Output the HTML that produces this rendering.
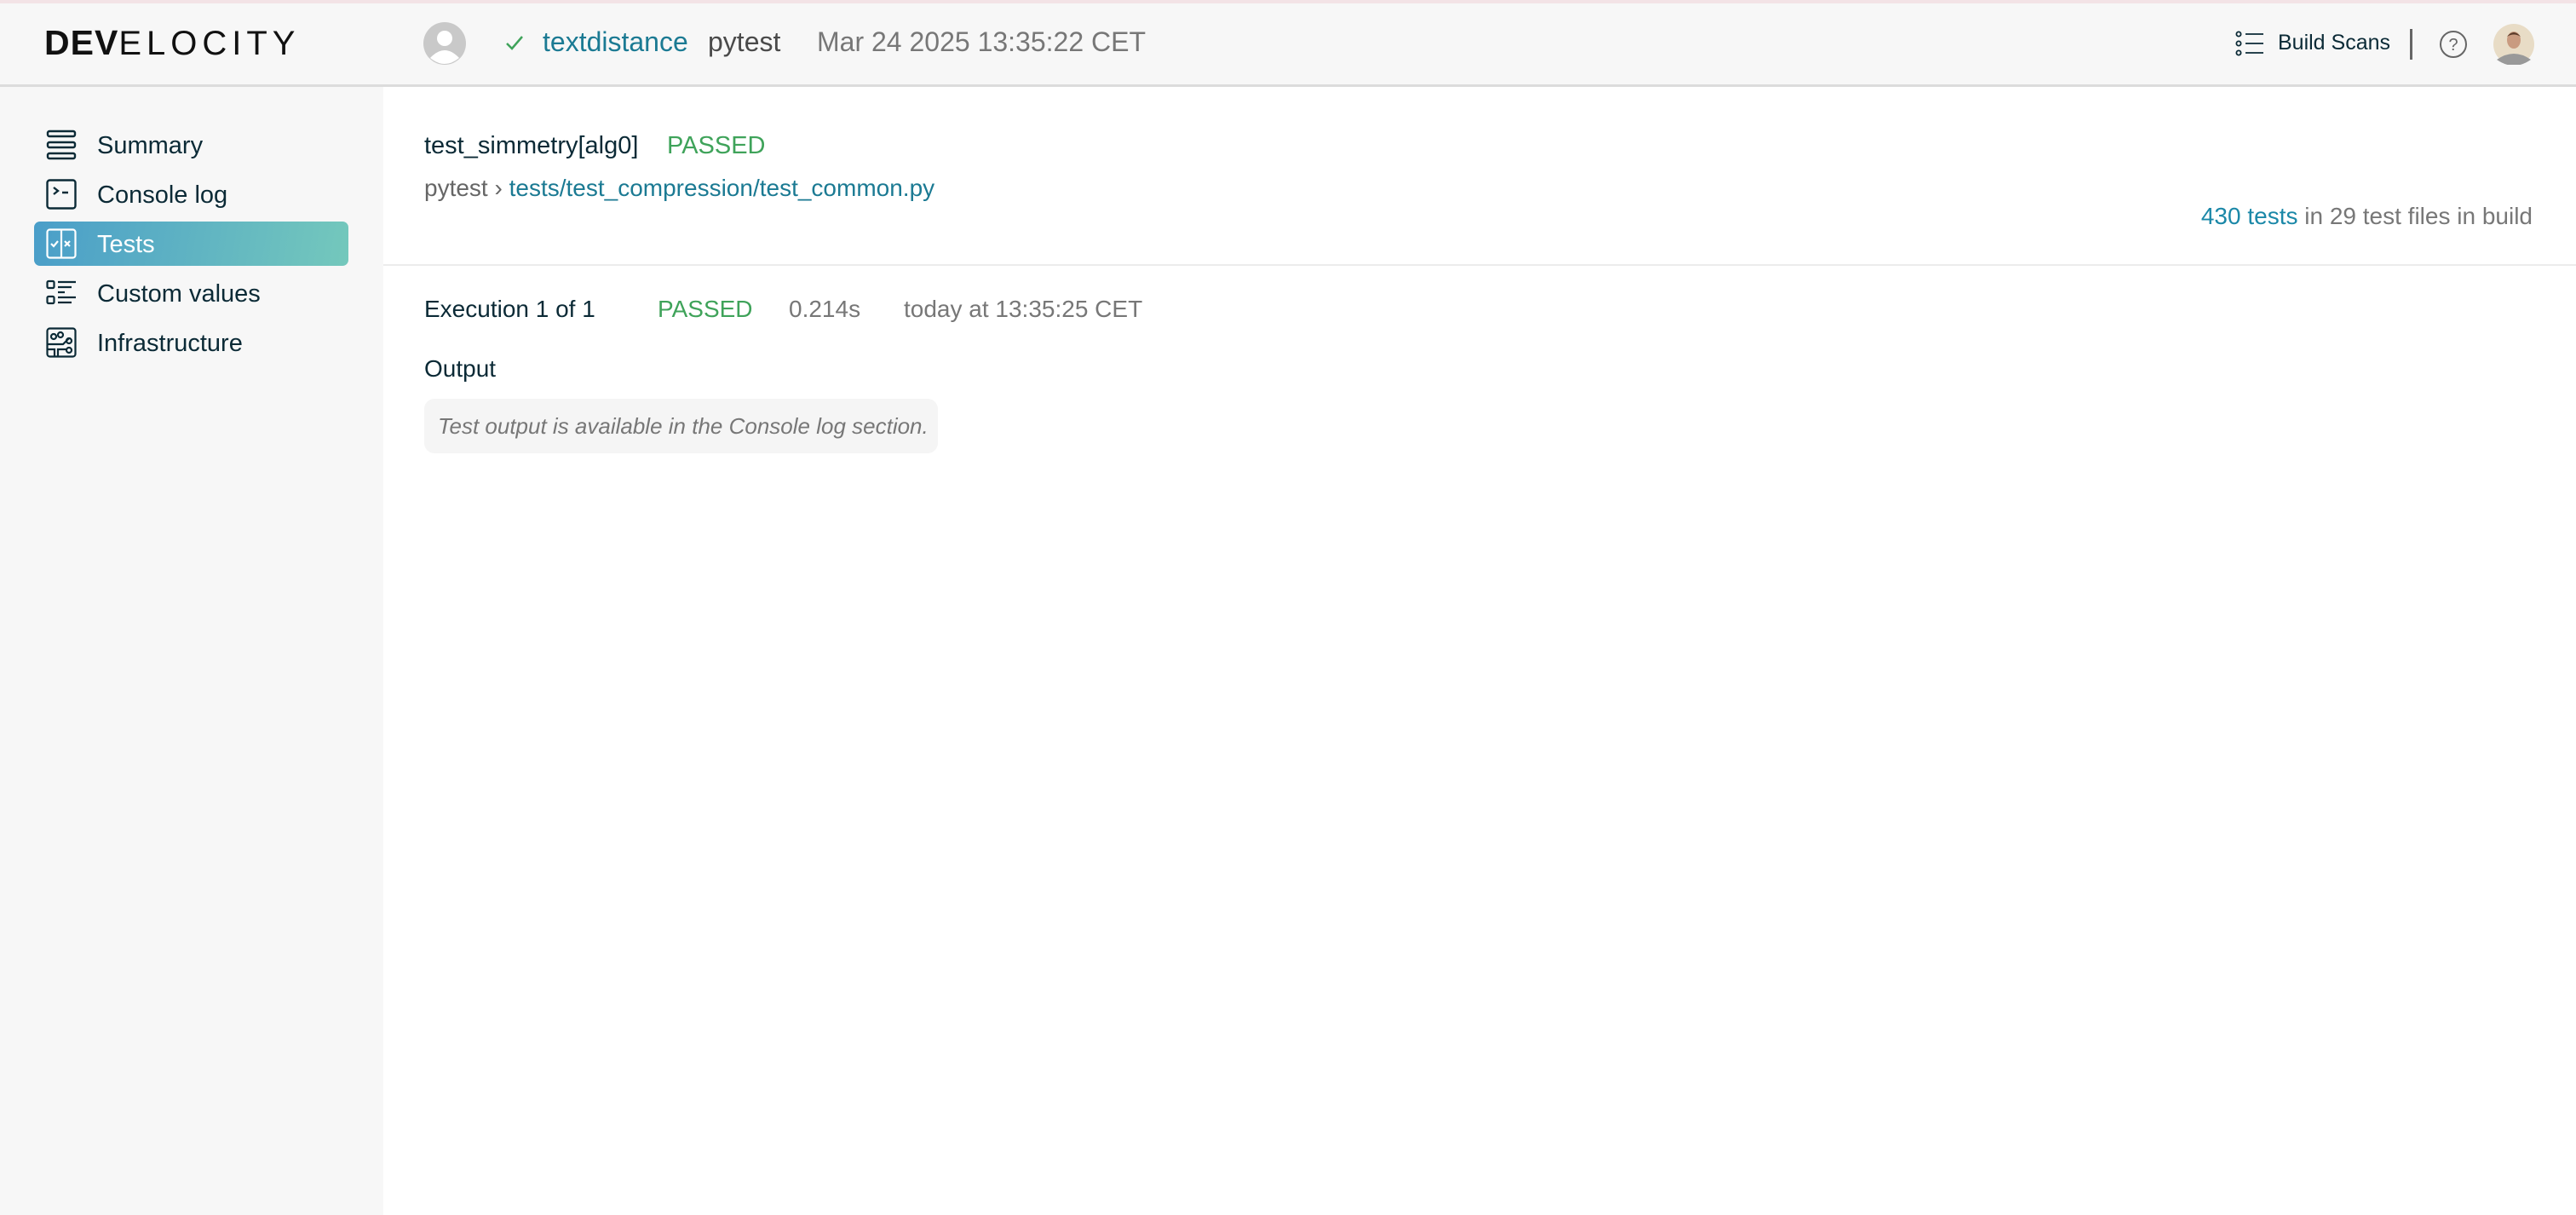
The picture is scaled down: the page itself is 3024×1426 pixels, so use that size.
<!DOCTYPE html>
<html><head><meta charset="utf-8"><style>
*{margin:0;padding:0;box-sizing:border-box}
body{width:3024px;height:1426px;overflow:hidden;background:#fff;font-family:"Liberation Sans",sans-serif;color:#0b2a36;position:relative}
.abs{position:absolute;white-space:nowrap}
#top{position:absolute;left:0;top:0;width:3024px;height:4px;background:#f3e3e6}
#hdr{position:absolute;left:0;top:4px;width:3024px;height:98px;background:#f7f7f7;border-bottom:3px solid #dcdcdc}
#side{position:absolute;left:0;top:102px;width:450px;height:1324px;background:#f7f7f7}
.nav{position:absolute;left:114px;font-size:29px;color:#0b2a36;line-height:40px}
.ico{position:absolute;left:54px}
</style></head><body>
<div id="top"></div>
<div id="hdr"></div>
<div class="abs" style="left:52px;top:28px;font-size:41px;line-height:44px"><span style="font-weight:bold;letter-spacing:1px;color:#111">DEV</span><span style="font-weight:normal;color:#111;letter-spacing:6px;font-size:40px">ELOCITY</span></div>
<svg class="abs" style="left:497px;top:26px" width="50" height="50" viewBox="0 0 50 50"><circle cx="25" cy="25" r="25" fill="#c9c9c9"/><circle cx="25" cy="19" r="9" fill="#fff"/><path d="M8 42 Q25 24 42 42 Q25 56 8 42Z" fill="#fff"/></svg>
<svg class="abs" style="left:592px;top:38px" width="24" height="24" viewBox="0 0 24 24"><path d="M3 13 L9 19 L21 5" fill="none" stroke="#3fa35a" stroke-width="2.5"/></svg>
<div class="abs" style="left:637px;top:29px;font-size:32px;line-height:40px;color:#1b7a93">textdistance</div>
<div class="abs" style="left:831px;top:29px;font-size:32px;line-height:40px;color:#4a4a4a">pytest</div>
<div class="abs" style="left:959px;top:29px;font-size:32px;line-height:40px;color:#777">Mar 24 2025 13:35:22 CET</div>
<svg class="abs" style="left:2624px;top:36px" width="34" height="30" viewBox="0 0 34 30"><g fill="none" stroke="#0b2a36" stroke-width="1.8"><circle cx="4" cy="4" r="2.6"/><circle cx="4" cy="15" r="2.6"/><circle cx="4" cy="26" r="2.6"/><path d="M12 4H33M12 15H33M12 26H33"/></g></svg>
<div class="abs" style="left:2674px;top:32px;font-size:25px;line-height:36px;color:#0b2a36">Build Scans</div>
<div class="abs" style="left:2829px;top:34px;width:3px;height:36px;background:#666"></div>
<svg class="abs" style="left:2863px;top:35px" width="34" height="34" viewBox="0 0 34 34"><circle cx="17" cy="17" r="15" fill="none" stroke="#666" stroke-width="2"/><text x="17" y="24" font-size="20" text-anchor="middle" fill="#666" font-family="Liberation Sans">?</text></svg>
<svg class="abs" style="left:2927px;top:28px" width="48" height="48" viewBox="0 0 48 48"><circle cx="24" cy="24" r="24" fill="#e8dcc6"/><path d="M4 42 Q24 28 44 42 Q24 56 4 42Z" fill="#999"/><ellipse cx="24" cy="19" rx="8" ry="10" fill="#c99b80"/><path d="M16 15 Q24 5 32 15 Q24 10 16 15Z" fill="#5a3b2a"/></svg>

<div id="side"></div>
<svg class="ico" style="top:152px" width="36" height="36" viewBox="0 0 36 36"><g fill="none" stroke="#0b2a36" stroke-width="2.4"><rect x="2" y="2" width="32" height="6" rx="2"/><rect x="2" y="15" width="32" height="6" rx="2"/><rect x="2" y="28" width="32" height="6" rx="2"/></g></svg>
<div class="nav" style="top:151px">Summary</div>
<svg class="ico" style="top:210px" width="36" height="36" viewBox="0 0 36 36"><g fill="none" stroke="#0b2a36" stroke-width="2.4"><rect x="1.5" y="1.5" width="33" height="33" rx="3"/><path d="M9 10L14 14L9 18M19 16H26"/></g></svg>
<div class="nav" style="top:209px">Console log</div>
<div class="abs" style="left:40px;top:260px;width:369px;height:52px;border-radius:7px;background:linear-gradient(100deg,#4a9ec9,#74c8bc)"></div>
<svg class="ico" style="top:268px" width="36" height="36" viewBox="0 0 36 36"><g fill="none" stroke="#fff" stroke-width="2.2"><rect x="1.5" y="1.5" width="33" height="33" rx="3"/><path d="M18 2V34M6 18L9 21L14 15M22 15L28 21M28 15L22 21"/></g></svg>
<div class="nav" style="top:267px;color:#fff">Tests</div>
<svg class="ico" style="top:328px" width="36" height="32" viewBox="0 0 36 32"><g fill="none" stroke="#0b2a36" stroke-width="2.2"><rect x="1.5" y="2" width="8" height="8" rx="1.5"/><rect x="1.5" y="20" width="8" height="8" rx="1.5"/><path d="M14 3H35M14 9H30M14 15H22M14 21H35M14 27H30"/></g></svg>
<div class="nav" style="top:325px">Custom values</div>
<svg class="ico" style="top:384px" width="36" height="36" viewBox="0 0 36 36"><g fill="none" stroke="#0b2a36" stroke-width="2.2"><rect x="1.5" y="1.5" width="33" height="33" rx="3"/><circle cx="9" cy="11" r="3"/><circle cx="17" cy="9" r="3"/><circle cx="27" cy="16" r="3"/><circle cx="27" cy="27" r="3"/><path d="M2 20H20L27 13M2 26H10V34M14 34V26H24"/></g></svg>
<div class="nav" style="top:383px">Infrastructure</div>

<div class="abs" style="left:498px;top:151px;font-size:29px;line-height:40px;color:#0b2a36">test_simmetry[alg0]</div>
<div class="abs" style="left:783px;top:151px;font-size:29px;line-height:40px;color:#3fa35a">PASSED</div>
<div class="abs" style="left:498px;top:201px;font-size:28px;line-height:40px;color:#666">pytest <span style="color:#666">&#8250;</span> <span style="color:#1b7a93">tests/test_compression/test_common.py</span></div>
<div class="abs" style="right:51px;top:234px;font-size:28px;line-height:40px;color:#777"><span style="color:#1b88a8">430 tests</span> in 29 test files in build</div>
<div class="abs" style="left:450px;top:310px;width:2574px;height:2px;background:#ececec"></div>
<div class="abs" style="left:498px;top:343px;font-size:28px;line-height:40px;color:#0b2a36">Execution 1 of 1</div>
<div class="abs" style="left:772px;top:343px;font-size:28px;line-height:40px;color:#3fa35a">PASSED</div>
<div class="abs" style="left:926px;top:343px;font-size:28px;line-height:40px;color:#777">0.214s</div>
<div class="abs" style="left:1061px;top:343px;font-size:28px;line-height:40px;color:#777">today at 13:35:25 CET</div>
<div class="abs" style="left:498px;top:413px;font-size:28px;line-height:40px;color:#0b2a36">Output</div>
<div class="abs" style="left:498px;top:468px;width:603px;height:64px;border-radius:12px;background:#f5f5f5"></div>
<div class="abs" style="left:514px;top:480px;font-size:26px;line-height:40px;color:#777;font-style:italic">Test output is available in the Console log section.</div>
</body></html>
